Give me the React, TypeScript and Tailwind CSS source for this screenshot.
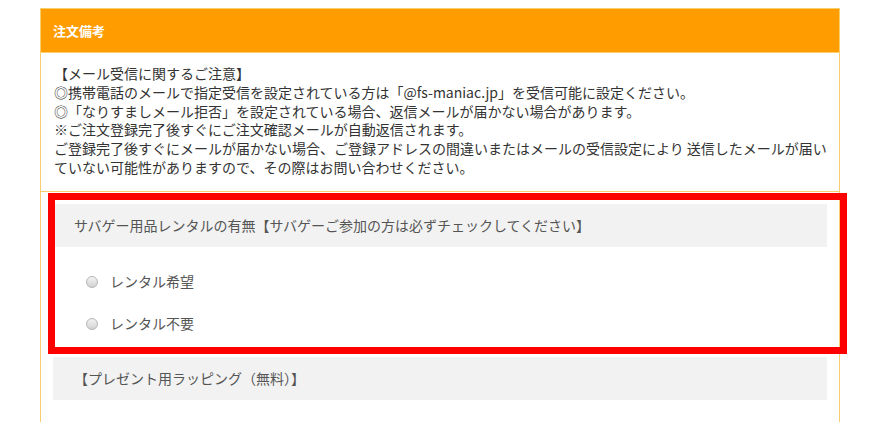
import React from 'react';

const font = { fontFamily: '"Noto Sans CJK JP", "Noto Sans", sans-serif' };

function Radio({ label }: { label: string }) {
  return (
    <label className="flex h-[42px] items-center pl-[33px]">
      <span className="h-[12px] w-[12px] rounded-full border border-[#b5b5b5] bg-gradient-to-b from-[#f4f4f4] to-[#d2d2d2]" />
      <span className="ml-[12px] text-[14px] text-[#555]">{label}</span>
    </label>
  );
}

export default function App() {
  return (
    <div className="min-h-screen bg-white pl-10 pt-2" style={font}>
      <div className="h-[414px] w-[800px] border border-b-0 border-[#f6cf6c]">
        <div className="flex h-[43px] items-center bg-[#ff9c00] px-3 text-[13px] font-bold text-white">
          注文備考
        </div>

        <div className="border-t border-b border-[#f6cf6c] pb-[14px] pl-[13px] pr-[8px] pt-[11px] text-[14px] leading-[18.8px] text-[#333]">
          <p>【メール受信に関するご注意】</p>
          <p>◎携帯電話のメールで指定受信を設定されている方は「@fs-maniac.jp」を受信可能に設定ください。</p>
          <p>◎「なりすましメール拒否」を設定されている場合、返信メールが届かない場合があります。</p>
          <p>※ご注文登録完了後すぐにご注文確認メールが自動返信されます。</p>
          <p>
            ご登録完了後すぐにメールが届かない場合、ご登録アドレスの間違いまたはメールの受信設定により
            送信したメールが届いていない可能性がありますので、その際はお問い合わせください。
          </p>
        </div>

        <div className="relative px-3 pt-3">
          <div className="flex h-[43px] items-center bg-[#f2f2f2] px-[21px] text-[14px] text-[#555]">
            サバゲー用品レンタルの有無【サバゲーご参加の方は必ずチェックしてください】
          </div>
          <div className="pb-3 pt-[14px]">
            <Radio label="レンタル希望" />
            <Radio label="レンタル不要" />
          </div>
          <div className="flex h-[43px] items-center bg-[#f2f2f2] px-[21px] text-[14px] text-[#555]">
            【プレゼント用ラッピング（無料）】
          </div>

          <div className="pointer-events-none absolute left-[7px] top-px h-[161px] w-[799px] border-[7px] border-[#ff0000]" />
        </div>
      </div>
    </div>
  );
}
